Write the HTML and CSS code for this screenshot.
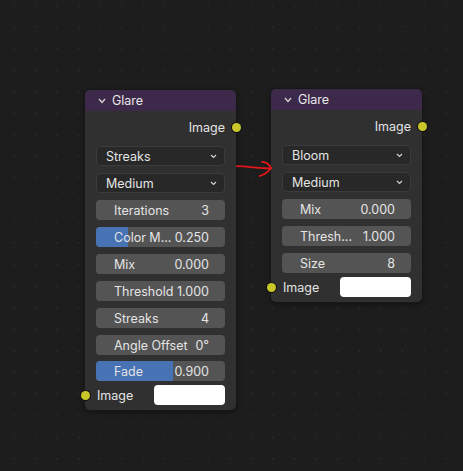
FILE: index.html
```html
<!DOCTYPE html>
<html lang="en">

<head>
    <meta charset="UTF-8">
    <meta name="viewport" content="width=device-width, initial-scale=1">
    <title>Glare Nodes</title>
    <link rel="stylesheet" href="styles.css">
</head>

<body>
    <div class="canvas">

        <!-- Glare node: streaks -->
        <div class="node node-streaks">
            <div class="node-header">
                <svg class="collapse" width="8" height="6" viewBox="0 0 8 6"><polyline points="1,1 4,4.5 7,1" /></svg>
                <span>Glare</span>
            </div>
            <div class="node-body">
                <div class="output-row">Image<span class="socket socket-out"></span></div>
                <div class="dropdown"><span>Streaks</span><svg width="7" height="5" viewBox="0 0 7 5"><polyline points="1,1 3.5,3.5 6,1" /></svg></div>
                <div class="dropdown"><span>Medium</span><svg width="7" height="5" viewBox="0 0 7 5"><polyline points="1,1 3.5,3.5 6,1" /></svg></div>
                <div class="field"><span class="label">Iterations</span><span class="value">3</span></div>
                <div class="field"><span class="fill" style="width: 25%"></span><span class="label">Color M...</span><span class="value">0.250</span></div>
                <div class="field"><span class="label">Mix</span><span class="value">0.000</span></div>
                <div class="field"><span class="label">Threshold</span><span class="value">1.000</span></div>
                <div class="field"><span class="label">Streaks</span><span class="value">4</span></div>
                <div class="field"><span class="label">Angle Offset</span><span class="value">0°</span></div>
                <div class="field field-tight"><span class="fill" style="width: 60%"></span><span class="label">Fade</span><span class="value">0.900</span></div>
                <div class="input-row">
                    <span class="socket socket-in"></span>
                    <span>Image</span>
                    <span class="swatch"></span>
                </div>
            </div>
        </div>

        <!-- Glare node: bloom -->
        <div class="node node-bloom">
            <div class="node-header">
                <svg class="collapse" width="8" height="6" viewBox="0 0 8 6"><polyline points="1,1 4,4.5 7,1" /></svg>
                <span>Glare</span>
            </div>
            <div class="node-body">
                <div class="output-row">Image<span class="socket socket-out"></span></div>
                <div class="dropdown"><span>Bloom</span><svg width="7" height="5" viewBox="0 0 7 5"><polyline points="1,1 3.5,3.5 6,1" /></svg></div>
                <div class="dropdown"><span>Medium</span><svg width="7" height="5" viewBox="0 0 7 5"><polyline points="1,1 3.5,3.5 6,1" /></svg></div>
                <div class="field"><span class="label">Mix</span><span class="value">0.000</span></div>
                <div class="field"><span class="label">Thresh...</span><span class="value">1.000</span></div>
                <div class="field"><span class="label">Size</span><span class="value">8</span></div>
                <div class="input-row">
                    <span class="socket socket-in"></span>
                    <span>Image</span>
                    <span class="swatch"></span>
                </div>
            </div>
        </div>

        <!-- hand-drawn arrow between the nodes -->
        <svg class="scribble" width="40" height="22" viewBox="0 0 40 22">
            <path d="M1 9.2 C8 9.2 13 10 20 10.6 C26 11.3 30 11.4 35 11.5" />
            <path d="M26 4.8 C30 5 33.5 7.5 35 11 C33 14 29 17.5 23.5 19" />
        </svg>

    </div>
</body>

</html>
```

FILE: styles.css
```css
* {
    box-sizing: border-box;
}

body {
    margin: 0;
    background-color: #1d1d1d;
    font-family: Inter, "DejaVu Sans", sans-serif;
    font-size: 12px;
    color: #e4e4e4;
}

.canvas {
    position: relative;
    width: 463px;
    height: 471px;
    overflow: hidden;
    background-image: radial-gradient(circle, #272727 0.9px, transparent 1.3px);
    background-size: 21.6px 21.6px;
    background-position: 3.2px -5.3px;
}

/* nodes sit on the free canvas */
.node {
    position: absolute;
    width: 151px;
    background: #303030;
    border-radius: 5px;
    box-shadow: 0 0 0 1px #171717, 0 2px 6px rgba(0, 0, 0, 0.45);
}

.node-streaks {
    left: 85px;
    top: 90px;
}

.node-bloom {
    left: 271px;
    top: 89px;
}

.node-header {
    height: 21px;
    display: flex;
    align-items: center;
    gap: 6px;
    padding-left: 13px;
    background: #3d2949;
    border-radius: 5px 5px 0 0;
    font-size: 12.5px;
    color: #e8e8e8;
}

.collapse polyline {
    fill: none;
    stroke: #d8d8d8;
    stroke-width: 1.2;
}

.node-body {
    display: flex;
    flex-direction: column;
    gap: 7px;
    padding: 6px 11px 5px 11px;
}

.output-row {
    position: relative;
    height: 20px;
    display: flex;
    align-items: center;
    justify-content: flex-end;
    margin-bottom: 2px;
    font-size: 12.5px;
}

.socket {
    position: absolute;
    top: 50%;
    width: 9px;
    height: 9px;
    margin-top: -4.5px;
    border-radius: 50%;
    background: #c9c62a;
    box-shadow: 0 0 0 1px #141414;
}

.socket-out {
    right: -15.5px;
}

.socket-in {
    left: -15.5px;
}

.dropdown {
    height: 20px;
    display: flex;
    align-items: center;
    justify-content: space-between;
    padding: 0 7px 0 9px;
    background: #282828;
    border: 1px solid #3b3b3b;
    border-radius: 4px;
    font-size: 12.5px;
}

.dropdown polyline {
    fill: none;
    stroke: #d0d0d0;
    stroke-width: 1.2;
}

.field {
    position: relative;
    height: 20px;
    display: flex;
    align-items: center;
    justify-content: space-between;
    padding: 0 16px 0 18px;
    background: #545454;
    border-radius: 4px;
    overflow: hidden;
    font-size: 12.5px;
}

.field-tight {
    margin-top: -1px;
}

.fill {
    position: absolute;
    left: 0;
    top: 0;
    bottom: 0;
    background: #4772b3;
}

.label,
.value {
    position: relative;
}

.input-row {
    position: relative;
    height: 20px;
    display: flex;
    align-items: center;
    justify-content: space-between;
    margin-top: -3px;
    padding-left: 1px;
    font-size: 12.5px;
}

.swatch {
    width: 71px;
    height: 20px;
    background: #ffffff;
    border-radius: 4px;
}

.scribble {
    position: absolute;
    left: 236px;
    top: 157px;
}

.scribble path {
    fill: none;
    stroke: #e0161a;
    stroke-width: 1.8;
    stroke-linecap: round;
}
```
